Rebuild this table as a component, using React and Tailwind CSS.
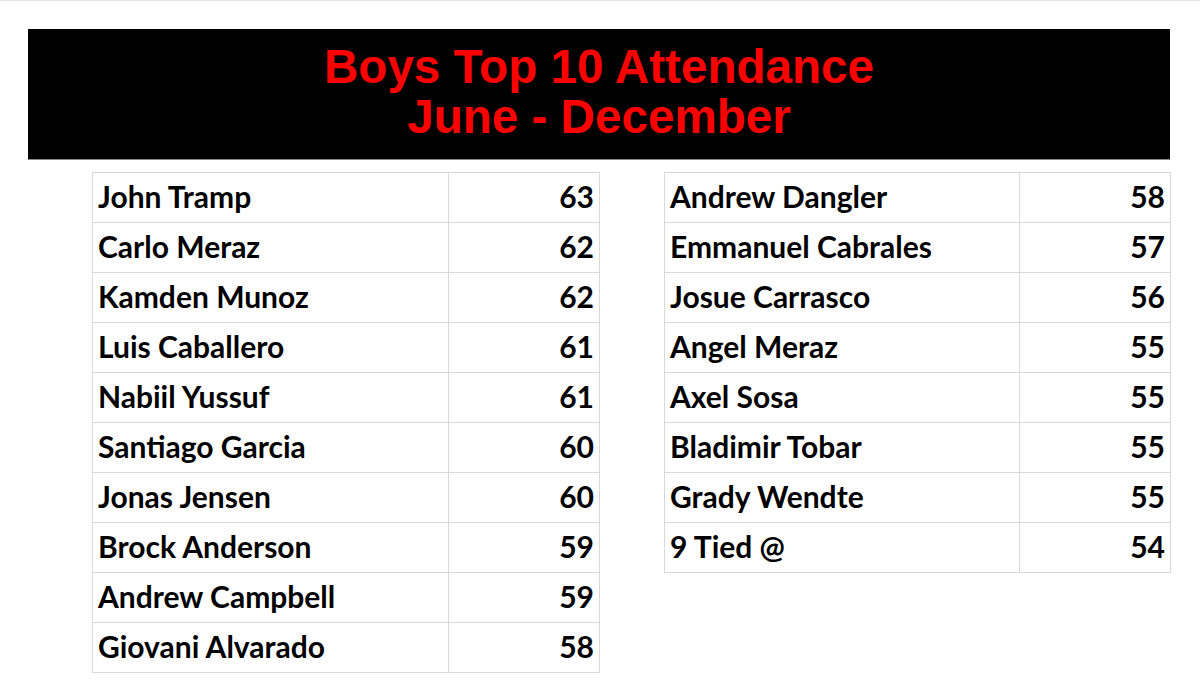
const left = [
  ["John Tramp", 63],
  ["Carlo Meraz", 62],
  ["Kamden Munoz", 62],
  ["Luis Caballero", 61],
  ["Nabiil Yussuf", 61],
  ["Santiago Garcia", 60],
  ["Jonas Jensen", 60],
  ["Brock Anderson", 59],
  ["Andrew Campbell", 59],
  ["Giovani Alvarado", 58],
];

const right = [
  ["Andrew Dangler", 58],
  ["Emmanuel Cabrales", 57],
  ["Josue Carrasco", 56],
  ["Angel Meraz", 55],
  ["Axel Sosa", 55],
  ["Bladimir Tobar", 55],
  ["Grady Wendte", 55],
  ["9 Tied @", 54],
];

const Table = ({ rows, nameWidth, className }) => (
  <table className={`border-collapse ${className}`}>
    <tbody>
      {rows.map(([name, n]) => (
        <tr key={name} className="h-[50px]">
          <td
            className="border border-[#d9d9d9] pl-[5px] pb-[4px] align-middle text-black"
            style={{ width: nameWidth }}
          >
            {name}
          </td>
          <td className="border border-[#d9d9d9] pr-[5px] pb-[4px] text-right align-middle text-black">
            {n}
          </td>
        </tr>
      ))}
    </tbody>
  </table>
);

export default function App() {
  return (
    <div className="w-[1200px] h-[682px] bg-white border-t border-[#e5e5e5] overflow-hidden">
      <div className="ml-[28px] mt-[28px] w-[1142px] h-[131px] bg-black border-b border-[#888] flex flex-col items-center justify-center font-['Liberation_Sans',Arial,sans-serif] font-bold text-[#ff0000] text-[47.6px] leading-[50px] pb-[5px]">
        <div>Boys Top 10 Attendance</div>
        <div>June - December</div>
      </div>
      <div className="flex items-start mt-[12px] font-['Lato','Open_Sans',sans-serif] font-bold text-[30px] leading-[36px]">
        <Table rows={left} nameWidth="356px" className="ml-[92px] w-[508px]" />
        <Table rows={right} nameWidth="355px" className="ml-[64px] w-[507px]" />
      </div>
    </div>
  );
}
